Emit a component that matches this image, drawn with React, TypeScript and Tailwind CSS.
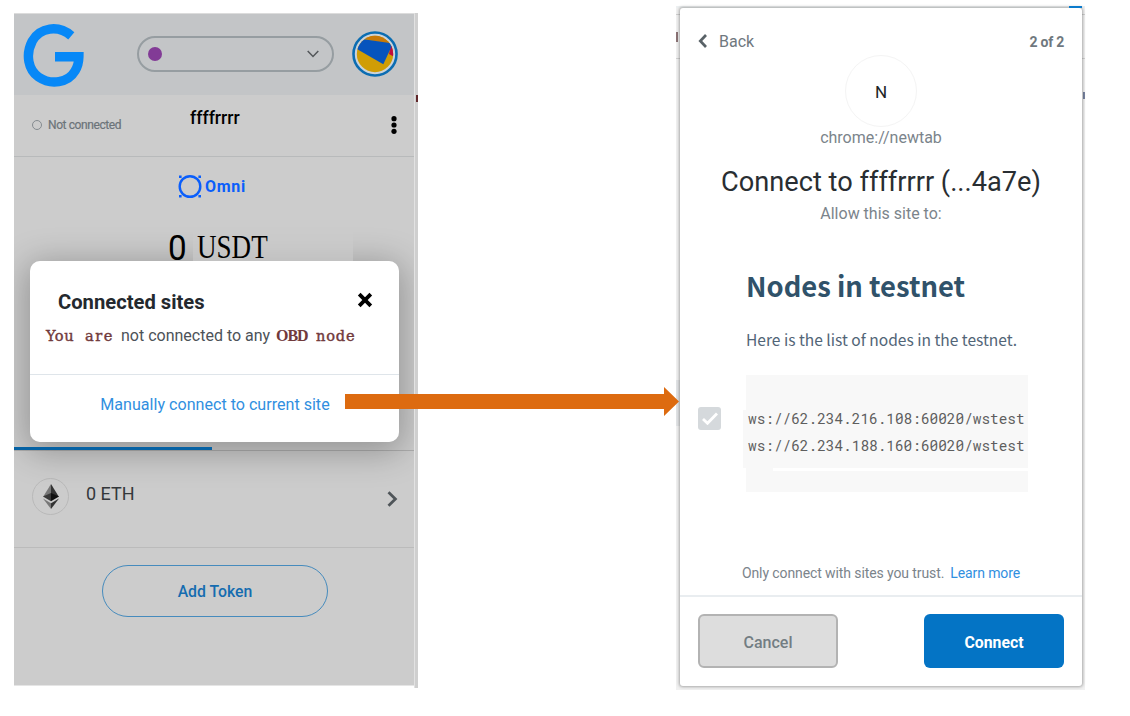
import React from "react";

function GoogleStyleLogo() {
  return (
    <svg className="h-[64px] w-[62px]" viewBox="0 0 62 64" fill="none" stroke="#0788f7">
      <path d="M48.3 11.8 C35 0.5 17 3.5 9.3 17 C2 31 5.5 46 15.5 53 C28 61.5 45 59 52 47 Q55.8 41 55.9 32.8 L32 32.8" strokeWidth="9.4" />
    </svg>
  );
}

function Avatar() {
  return (
    <svg className="h-[46px] w-[46px]" viewBox="0 0 46 46">
      <defs>
        <clipPath id="avatar-disc"><circle cx="23" cy="23" r="18.2" /></clipPath>
      </defs>
      <circle cx="23" cy="23" r="21.5" fill="#cbd3da" stroke="#0b6db2" strokeWidth="2.6" />
      <g clipPath="url(#avatar-disc)">
        <path d="M0 0h46v46H0z" fill="#d09d05" />
        <path d="M0 0h46v15L13 8z" fill="#c87906" />
        <path d="M39 14h7v14l-9-5z" fill="#c10b3d" />
        <path d="M10 8L41 12.5 31.3 33.3 3 17z" fill="#0654bd" />
      </g>
    </svg>
  );
}

function Ethereum() {
  return (
    <svg className="h-[25px] w-[16px]" viewBox="0 0 16 25">
      <path d="M8 0L0 13 8 10z" fill="#777" />
      <path d="M8 0L16 13 8 10z" fill="#333" />
      <path d="M0 12.6L8 9V17.3z" fill="#393939" />
      <path d="M16 12.6L8 9V17.3z" fill="#111" />
      <path d="M0 14.6L8 19.2V25z" fill="#777" />
      <path d="M16 14.6L8 19.2V25z" fill="#333" />
    </svg>
  );
}

function SitesDialog() {
  return (
    <div className="absolute left-[16px] top-[248px] z-20 flex h-[181px] w-[369px] flex-col rounded-[10px] bg-white">
      <div className="flex h-[114px] shrink-0 flex-col border-b border-[#dfe5ea]">
        <div className="flex h-[65px] items-start justify-between pl-[28px] pr-[26px] pt-[28px]">
          <h2 className="mt-px text-[20.2px] font-bold leading-6 text-[#24292e]">Connected sites</h2>
          <svg className="mt-[3px] h-4 w-4" viewBox="0 0 16 16" stroke="#000" strokeWidth="3.8">
            <path d="M2.2 2.2L13.8 13.8M13.8 2.2L2.2 13.8" />
          </svg>
        </div>
        <p className="flex h-5 items-center whitespace-nowrap pl-4 text-[16px] text-[#4c5258]">
          <span className="flex w-[75px] gap-[11px] font-['DejaVu_Serif',serif] text-[14.6px] text-[#713a3c] [-webkit-text-stroke:0.4px]">
            <span className="tracking-[0.5px]">You</span><span className="tracking-[1.5px]">are</span>
          </span>
          <span className="w-[155px]">not connected to any</span>
          <span className="flex gap-[10px] text-[#713a3c]">
            <span className="w-[30px] font-['Liberation_Serif',serif] text-[16px] font-bold tracking-[-1px]">OBD</span>
            <span className="self-center font-['DejaVu_Serif',serif] text-[14.6px] tracking-[0.8px] [-webkit-text-stroke:0.4px]">node</span>
          </span>
        </p>
      </div>
      <a className="flex h-[60px] items-center justify-center pl-px text-[16.1px] text-[#318fdf]">Manually connect to current site</a>
    </div>
  );
}

function WalletPanel() {
  return (
    <section className="relative ml-[14px] mt-[13px] flex h-[675px] w-[404px] shrink-0">
      <div className="relative flex h-[675px] w-[400px] flex-col overflow-hidden border-b-2 border-b-white bg-[#ccc]">
        <header className="flex h-[82px] shrink-0 items-start border-t border-[#dcdcdc] bg-[#c3c5c7] pl-[9px]">
          <div className="mt-[10px] h-[64px] w-[62px]"><GoogleStyleLogo /></div>
          <div className="ml-[52px] mt-[22px] flex h-9 w-[197px] items-center justify-between rounded-full border-2 border-[#969da1] pl-[9px] pr-[13px]">
            <span className="h-[14px] w-[14px] rounded-full bg-[#823b96]" />
            <svg className="h-2 w-3" viewBox="0 0 12 8" fill="none" stroke="#53575a" strokeWidth="1.5"><path d="M.7 1l5.3 5.5L11.3 1" /></svg>
          </div>
          <div className="ml-[18px] mt-[17px]"><Avatar /></div>
        </header>
        <div className="flex h-[62px] shrink-0 items-start border-b border-[#b8babb] pl-[18px]">
          <div className="mt-[20px] flex h-5 w-[158px] items-center gap-[6px] text-[#6b7379]">
            <span className="h-[10px] w-[10px] rounded-full border-[1.5px] border-[#858b90]" />
            <span className="text-[12px] tracking-[-0.4px] [-webkit-text-stroke:0.2px]">Not connected</span>
          </div>
          <h1 className="mt-[13px] w-[201px] text-[17.6px] font-medium leading-5 text-black">ffffrrrr</h1>
          <svg className="mt-[21px] h-[18px] w-[6px]" viewBox="0 0 6 18"><circle cx="3" cy="2.7" r="2.6" /><circle cx="3" cy="9" r="2.6" /><circle cx="3" cy="15.3" r="2.6" /></svg>
        </div>
        <div className="flex h-[294px] shrink-0 flex-col items-start border-b border-[#adadad]">
          <div className="ml-[164px] mt-[17px] flex h-[25px] items-center gap-[3px] text-[#0a5efb]">
            <svg className="h-[25px] w-[24px]" viewBox="0 0 24 25" fill="none" stroke="currentColor">
              <circle cx="12" cy="12.5" r="10.3" strokeWidth="2.4" />
              <path d="M1 2.8h2.6M20.4 2.8H23M1 22.2h2.6M20.4 22.2H23" strokeWidth="2.4" />
            </svg>
            <span className="text-[16px] font-bold tracking-[0.7px]">Omni</span>
          </div>
          <div className="relative z-10 ml-[154px] mt-[30px] flex h-10 items-center text-black">
            <span className="w-[25px] origin-left scale-x-95 text-[35px] leading-10">0</span>
            <span className="h-10 w-[160px] bg-[#ccc]/60 pl-[4px]">
              <span className="inline-block origin-left scale-x-[0.82] font-['Liberation_Serif',serif] text-[33px] leading-[37px]">USDT</span>
            </span>
          </div>
          <div className="relative z-10 mt-auto h-[3px] w-[198px] bg-[#0561a3]" />
        </div>
        <div className="flex h-[97px] shrink-0 items-start border-b border-[#bbb] pl-[18px]">
          <div className="mt-[27px] flex h-[37px] w-[37px] items-center justify-center rounded-full border border-[#b9b9b9]"><Ethereum /></div>
          <span className="ml-[17px] mt-[33px] w-[301px] shrink-0 text-[18px] leading-5 text-[#34383b]">0 ETH</span>
          <svg className="mt-[40px] h-4 w-[11px]" viewBox="0 0 11 16" fill="none" stroke="#4f5559" strokeWidth="2.8"><path d="M1.5 1.3L8.4 8l-6.9 6.7" /></svg>
        </div>
        <button className="ml-[88px] mt-[17px] flex h-[52px] w-[226px] shrink-0 items-center justify-center rounded-full border border-[#468bbd] pt-[2px] text-[15.8px] font-medium text-[#156cb0]">Add Token</button>
        <div className="absolute left-[16px] top-[248px] h-[181px] w-[369px] rounded-[10px] shadow-[0_6px_34px_4px_rgba(0,0,0,0.28)]" />
        <SitesDialog />
      </div>
      <div className="w-1 border-l border-[#e2e2e2] bg-[#cfcfcf]" />
      <div className="absolute right-0 top-[82px] h-[7px] w-[2px] bg-[#60272a]" />
      <div className="absolute bottom-[1px] left-0 h-[2px] w-[400px] border-t border-[#e5e5e5]" />
    </section>
  );
}

function ConnectPanel() {
  return (
    <section className="relative ml-[258px] mt-[6px] h-[684px] w-[409px] shrink-0 bg-[#f1f1f1] pl-[4px] pt-[2px]">
      <div className="absolute left-0 top-0 h-[2px] w-full bg-[#edf0f1]" />
      <div className="absolute right-[3px] top-0 z-10 h-[2px] w-[13px] bg-[#0b7bcc]" />
      <div className="absolute left-0 top-[8px] h-px w-full bg-[#cfcfcf]" />
      <div className="absolute left-0 top-[52px] h-px w-full bg-[#d2d2d2]" />
      <div className="absolute left-0 top-[26px] h-[10px] w-[2px] bg-[#8b7375]" />
      <div className="absolute right-0 top-[86px] h-[7px] w-[2px] bg-[#76829f]" />
      <div className="absolute left-0 top-[374px] h-[46px] w-[4px] bg-[#e2e4e6]" />
      <div className="relative flex h-[678px] w-[402px] flex-col rounded-[3px] bg-white shadow-[0_0_3px_1px_rgba(0,0,0,0.3)]">
        <div className="flex h-[66px] items-center justify-between pl-[18px] pr-[18px] text-[#6f787e]">
          <div className="flex items-center gap-[13px] text-[16px]">
            <svg className="h-[14px] w-[9px]" viewBox="0 0 9 14" fill="none" stroke="#596267" strokeWidth="2.7"><path d="M8 1L2.3 7 8 13" /></svg>
            <span className="-ml-px pt-[2px]">Back</span>
          </div>
          <span className="pt-[2px] text-[14px] font-bold tracking-[-0.25px]">2 of 2</span>
        </div>
        <div className="-mt-[19px] flex flex-col items-center">
          <div className="flex h-[72px] w-[72px] items-center justify-center rounded-full border border-[#f4f4f4] pt-[3px] text-[17px] text-[#202427]">N</div>
          <div className="mt-[1px] h-5 text-[16px] leading-5 text-[#7b848b]">chrome://newtab</div>
          <h2 className="mt-[18px] h-[32px] whitespace-nowrap text-[27.2px] leading-8 text-[#292e32]">Connect to ffffrrrr (...4a7e)</h2>
          <div className="mt-[6px] h-5 text-[16px] leading-5 text-[#7b848b]">Allow this site to:</div>
        </div>
        <div className="mt-[41px] pl-[66px] font-['Noto_Sans_CJK_SC',sans-serif]">
          <h3 className="h-[40px] text-[27.4px] font-bold leading-[40px] text-[#30526a]">Nodes in testnet</h3>
          <p className="mt-[22px] h-6 text-[15.55px] leading-6 text-[#526577]">Here is the list of nodes in the testnet.</p>
        </div>
        <div className="mt-[24px] flex pl-[18px]">
          <div className="mt-[32px] flex h-[23px] w-[23px] items-center justify-center rounded-[3px] bg-[#d5d9dc]">
            <svg className="h-[13px] w-[16px]" viewBox="0 0 16 13" fill="none" stroke="#fff" strokeWidth="2.8"><path d="M1 7l4.5 4.3L15 1.5" /></svg>
          </div>
          <div className="ml-[22px] flex flex-col items-end">
            <div className="h-[35px] w-[282px] bg-[#f8f8f8]" />
            <div className="h-[58px] w-[285px] bg-[#f8f8f8] pl-[5px] font-['Roboto_Mono',monospace] text-[14.42px] leading-[27px] text-[#5e5e5e]">
              <div className="-mt-[5px]">ws://62.234.216.108:60020/wstest</div>
              <div>ws://62.234.188.160:60020/wstest</div>
            </div>
            <div className="h-[3px] w-[282px]"><div className="h-[3px] w-[27px] bg-[#f8f8f8]" /></div>
            <div className="h-[21px] w-[282px] bg-[#f8f8f8]" />
          </div>
        </div>
        <div className="mt-auto flex h-[46px] shrink-0 items-center justify-center gap-[6px] border-b-2 border-[#e9edf0] text-[14px] tracking-[-0.1px] text-[#7b848b]">
          <span>Only connect with sites you trust.</span>
          <a className="text-[#318fdf]">Learn more</a>
        </div>
        <div className="flex h-[89px] shrink-0 items-start justify-between px-[18px] pt-[17px]">
          <button className="h-[54px] w-[140px] rounded-[6px] border-[2.5px] border-[#b3b3b3] bg-[#ddd] pt-[3px] text-[16px] font-medium text-[#737d83]">Cancel</button>
          <button className="h-[54px] w-[140px] rounded-[6px] bg-[#0474c5] pt-[3px] text-[15.8px] font-bold text-white">Connect</button>
        </div>
      </div>
    </section>
  );
}

export default function App() {
  return (
    <main className="relative flex h-[716px] w-[1130px] overflow-hidden bg-white font-[Roboto,sans-serif]">
      <WalletPanel />
      <ConnectPanel />
      <svg className="absolute left-[345px] top-[387px] z-30 h-[29px] w-[334px]" viewBox="0 0 334 29">
        <path d="M0 7h319V0l15 14.5L319 29v-7H0z" fill="#dd6b10" />
      </svg>
    </main>
  );
}
